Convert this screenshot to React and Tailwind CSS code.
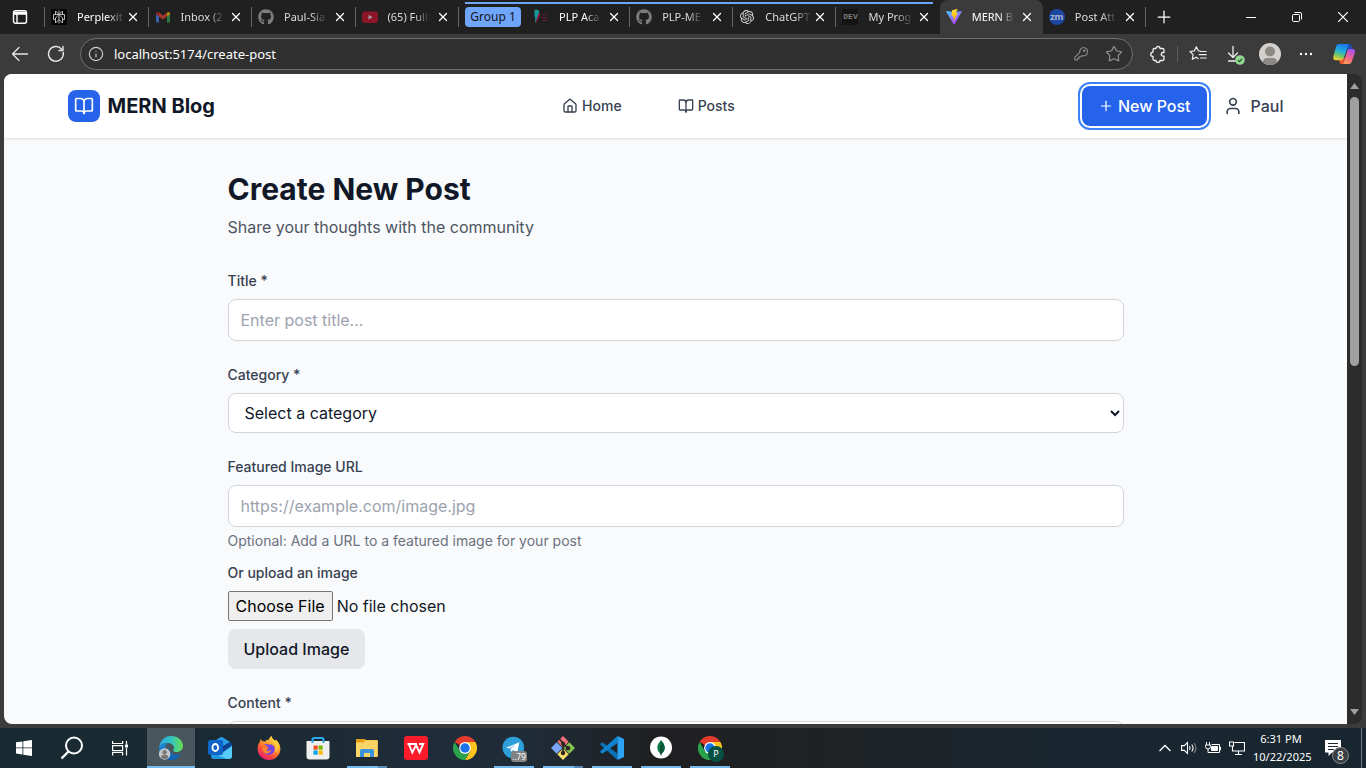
import React from "react";
import {
  BookOpen,
  House,
  Info,
  Plus,
  Star,
  User,
  X,
} from "lucide-react";
import { FaGithub } from "react-icons/fa";
import { SiOpenai } from "react-icons/si";

/* ---------- Favicons ---------- */

const PerplexityIcon = () => (
  <svg viewBox="0 0 16 16" className="size-4">
    <rect width="16" height="16" rx="1" fill="#050505" />
    <g fill="none" stroke="#b9b9b9" strokeWidth="1">
      <path d="M8 1.500v13M8 5.500 4.500 2v3.500M8 5.500 11.500 2v3.500M2.500 5.500h11v5h-2M2.500 5.500v5h2M8 5.500 4.500 9v5L8 10.500l3.500 3.500V9z" />
    </g>
  </svg>
);

const GmailIcon = () => (
  <svg viewBox="0 0 16 16" className="size-4 opacity-65">
    <path d="M1 4v9.500h3V6.500z" fill="#4285f4" />
    <path d="M15 4v9.500h-3V6.500z" fill="#34a853" />
    <path d="M4 7.500 8 10.500l4-3V3.500L8 6.500l-4-3z" fill="#ea4335" />
    <path d="M1 4.500C1 3 2.500 2.300 4 3.500v4L1 5.300z" fill="#c5221f" />
    <path d="M15 4.500c0-1.500-1.500-2.200-3-1v4l3-2.200z" fill="#fbbc04" />
  </svg>
);

const GithubIcon = () => <FaGithub className="size-4 text-[#7d7d7d]" />;

const YoutubeIcon = () => (
  <svg viewBox="0 0 16 16" className="size-4">
    <rect y="2.500" width="16" height="11.500" rx="3" fill="#8c1628" />
    <path d="M6.500 5.800v4.800l4-2.400z" fill="#a99a9c" />
  </svg>
);

const PlpIcon = () => (
  <svg viewBox="0 0 16 16" className="size-4">
    <path d="M1.500.8H5L6.500 3 4.200 9 2.200 14.500V9L1.500 7z" fill="#16999c" />
    <path d="m6 3 1 3-2.500 5.500-2 3L4.500 8z" fill="#a3173f" />
    <path d="M9.500 5.500h3.500M8 8.500h6M9.500 11.500h5" stroke="#6b1733" strokeWidth="1.200" />
  </svg>
);

const OpenaiIcon = () => <SiOpenai className="size-[14px] text-[#d6d6d6]" />;

const DevIcon = () => (
  <span className="flex size-4 items-center justify-center bg-[#141414] font-['Liberation_Mono',monospace] text-[8px] leading-3 font-bold text-[#7d7d7d]">
    DEV
  </span>
);

const ViteIcon = () => (
  <svg viewBox="0 0 32 32" className="size-4">
    <defs>
      <linearGradient id="viteA" x1="0" y1="0" x2="0.6" y2="1">
        <stop offset="0" stopColor="#41d1ff" />
        <stop offset="1" stopColor="#bd34fe" />
      </linearGradient>
      <linearGradient id="viteB" x1="0" y1="0" x2="0" y2="1">
        <stop offset="0" stopColor="#ffea83" />
        <stop offset="0.1" stopColor="#ffdd35" />
        <stop offset="1" stopColor="#ffa800" />
      </linearGradient>
    </defs>
    <path d="M31.500 5.500 17 30.700c-.4.700-1.400.7-1.800 0L.500 5.500c-.5-.8.200-1.700 1.100-1.600L16 6.400l14.400-2.500c.9-.1 1.600.8 1.100 1.600z" fill="url(#viteA)" />
    <path d="m22.800.2-10.600 2.100c-.2 0-.3.200-.3.400l-.7 11c0 .3.200.500.500.4l3-.7-.9 4.300c-.1.300.2.600.5.500l1.800-.5-1.400 6.700c-.1.400.500.600.7.300l8-16.500c.1-.3-.1-.600-.500-.6l-3 .6 2.900-7.400z" fill="url(#viteB)" />
  </svg>
);

const ZoomIcon = () => (
  <span className="flex size-4 items-center justify-center rounded-full bg-[#1b479f] font-['Open_Sans',sans-serif] text-[9px] leading-3 font-bold text-[#a9b6d3]">
    zm
  </span>
);

/* ---------- Browser chrome ---------- */

const tabsBefore = [
  { title: "Perplexit", icon: PerplexityIcon, bright: true },
  { title: "Inbox (2", icon: GmailIcon },
  { title: "Paul-Sia", icon: GithubIcon },
  { title: "(65) Full", icon: YoutubeIcon },
];

const tabsAfter = [
  { title: "PLP Aca", icon: PlpIcon, bright: true },
  { title: "PLP-ME", icon: GithubIcon },
  { title: "ChatGPT", icon: OpenaiIcon },
  { title: "My Prog", icon: DevIcon, noLine: true },
  { title: "MERN B", icon: ViteIcon, active: true },
  { title: "Post Att", icon: ZoomIcon },
];

function Tab({ title, icon: Icon, bright, active, noLine }) {
  return (
    <div
      className={
        active
          ? "flex h-full min-w-0 items-center rounded-t-lg bg-[#3b3b3b] pl-[6px]"
          : "flex h-full min-w-0 items-center pl-[6px]"
      }
    >
      <button type="button" className="flex min-w-0 flex-1 items-center gap-[10px]">
        <span className="flex w-4 shrink-0 items-center justify-center">
          <Icon />
        </span>
        <span
          className={
            bright || active
              ? "text-left text-[11px] leading-4 whitespace-nowrap text-white [mask-image:linear-gradient(to_right,black_65%,transparent_105%)]"
              : "text-left text-[11px] leading-4 whitespace-nowrap text-[#dcdcdc] [mask-image:linear-gradient(to_right,black_65%,transparent_105%)]"
          }
        >
          {title}
        </span>
      </button>
      <button type="button" aria-label="Close tab" className="mr-2 flex w-4 shrink-0 items-center justify-end text-white">
        <X className="size-[14px]" strokeWidth={2.200} />
      </button>
      <span className={active || noLine ? "h-5 w-px shrink-0" : "h-5 w-px shrink-0 bg-[#666666]"} />
    </div>
  );
}

function TabStrip() {
  return (
    <div className="flex h-[34px] shrink-0 items-center bg-[#202020]">
      <button type="button" aria-label="Tab actions" className="flex w-11 shrink-0 items-center pl-3">
        <svg viewBox="0 0 16 16" className="size-4" fill="none" stroke="#fff" strokeWidth="1.400">
          <rect x="1.500" y="1.700" width="13" height="12.600" rx="2" />
          <path d="M1.500 3.500h13M1.500 5h13M5 5v9" />
        </svg>
      </button>
      <span className="h-5 w-px shrink-0 bg-[#666666]" />
      <div className="grid h-full w-[414px] shrink-0 grid-cols-4">
        {tabsBefore.map((t) => (
          <Tab key={t.title} {...t} />
        ))}
      </div>
      <div className="relative flex h-full shrink-0 items-center">
        <span className="absolute top-[2px] right-[213px] left-[6px] h-[2px] bg-[#6fa5fb]" />
        <button type="button" className="mr-[6px] ml-[6px] h-5 w-14 rounded bg-[#6fa5fb] text-[12px] leading-4 text-[#151515]">
          Group 1
        </button>
        <div className="grid h-full w-[619px] grid-cols-6">
          {tabsAfter.map((t) => (
            <Tab key={t.title} {...t} />
          ))}
        </div>
      </div>
      <button type="button" aria-label="New tab" className="ml-2 text-white">
        <Plus className="size-5" strokeWidth={1.500} />
      </button>
      <div className="ml-auto flex h-full">
        <button type="button" aria-label="Minimize" className="flex w-[46px] items-center justify-center">
          <span className="h-px w-[10px] bg-white" />
        </button>
        <button type="button" aria-label="Restore" className="flex w-[46px] items-center justify-center">
          <svg viewBox="0 0 10 10" className="size-[10px]" fill="none" stroke="#fff">
            <rect x=".5" y="2.500" width="7" height="7" rx="1" />
            <path d="M2.500.5h5.500a1.500 1.500 0 0 1 1.500 1.500v5.500" />
          </svg>
        </button>
        <button type="button" aria-label="Close" className="flex w-[46px] items-center justify-center">
          <svg viewBox="0 0 10 10" className="size-[10px]" stroke="#fff" strokeWidth="1.200">
            <path d="m0 0 10 10M10 0 0 10" />
          </svg>
        </button>
      </div>
    </div>
  );
}

const CopilotIcon = () => (
  <svg viewBox="0 0 24 24" className="size-6">
    <defs>
      <linearGradient id="copA" x1="0.5" y1="0" x2="0.2" y2="1">
        <stop offset="0" stopColor="#1b7df0" />
        <stop offset="0.4" stopColor="#20b0dc" />
        <stop offset="0.7" stopColor="#7cc860" />
        <stop offset="1" stopColor="#ffd02e" />
      </linearGradient>
      <linearGradient id="copB" x1="0.7" y1="0" x2="0.3" y2="1">
        <stop offset="0" stopColor="#a050f0" />
        <stop offset="0.5" stopColor="#f0609a" />
        <stop offset="1" stopColor="#ff9d4d" />
      </linearGradient>
    </defs>
    <path d="M14 2h3.500c1.300 0 1.600.8 2 2.500l.8 2.500h-6z" fill="#1650b8" />
    <path d="M7 16h6l-2 6H9.500c-1.300 0-1.600-.7-2-2z" fill="#f3552f" />
    <path d="M7 2h8c1.500 0 1 2 .5 3.500L12 15.500c-.7 1.700-1.600 2.700-3.700 2.700H4C1.500 18.200.8 16.500 1.500 14L4 5c.6-2 1.300-3 3-3z" fill="url(#copA)" />
    <path d="M17 22H9.500c1.500 0 2-1 2.500-2.600l3-10C15.600 7.500 16.500 7 18 7h2.500C23 7 23.500 9 22.800 11.200L20 19c-.6 2-1.300 3-3 3z" fill="url(#copB)" />
  </svg>
);

function Toolbar() {
  return (
    <div className="flex h-10 shrink-0 items-center pr-[10px] pl-[10px]">
      <button type="button" aria-label="Back" className="text-[#e6e6e6]">
        <svg viewBox="0 0 20 20" className="size-5" fill="none" stroke="currentColor" strokeWidth="1.300" strokeLinecap="round" strokeLinejoin="round">
          <path d="M17.500 10H2.500M9 3.500 2.500 10 9 16.500" />
        </svg>
      </button>
      <button type="button" aria-label="Refresh" className="ml-4 text-[#e6e6e6]">
        <svg viewBox="0 0 20 20" className="size-5" fill="none" stroke="currentColor" strokeWidth="1.400" strokeLinecap="round" strokeLinejoin="round">
          <path d="M17.200 8.500A7.400 7.400 0 1 1 15.500 5M17 2.500V6.500h-4" />
        </svg>
      </button>
      <div className="ml-[14px] flex h-8 min-w-0 flex-1 items-center rounded-full border border-[#6e6e6e] bg-[#303030] pr-[9px] pl-[7px]">
        <Info className="size-4 shrink-0 text-[#cfcfcf]" strokeWidth={1.700} />
        <input
          aria-label="Address"
          defaultValue="localhost:5174/create-post"
          className="ml-[10px] min-w-0 flex-1 bg-transparent text-[13px] leading-5 text-white outline-none"
        />
        <svg viewBox="0 0 16 16" className="size-4 shrink-0" fill="none" stroke="#8c8c8c" strokeWidth="1.100" strokeLinejoin="round">
          <path d="M10.300 1.500a4.200 4.200 0 1 1-1.400 8.100L7.700 10.800H6v1.700H4.500V14H1.800v-2.700l5-5A4.200 4.200 0 0 1 10.300 1.500z" />
          <circle cx="11.300" cy="4.700" r=".7" />
        </svg>
        <Star className="ml-4 size-[18px] shrink-0 text-[#9b9b9b]" strokeWidth={1.400} />
      </div>
      <button type="button" aria-label="Extensions" className="ml-4 text-[#efefef]">
        <svg viewBox="0 0 18 18" className="size-[18px]" fill="none" stroke="currentColor" strokeWidth="1.300" strokeLinejoin="round">
          <path d="M4 5a1.500 1.500 0 0 1 1.500-1.500H7a2 2 0 0 1 4 0h2.500A1.500 1.500 0 0 1 15 5v2.500h-1a1.800 1.800 0 0 0 0 3.600h1V14a1.500 1.500 0 0 1-1.500 1.500H11a2 2 0 0 1-4 0H5.500A1.500 1.500 0 0 1 4 14v-2.500a2.200 2.200 0 0 1 0-4.400z" />
        </svg>
      </button>
      <span className="mr-[11px] ml-[10px] h-4 w-px bg-[#606060]" />
      <button type="button" aria-label="Favorites" className="text-[#efefef]">
        <svg viewBox="0 0 18 18" className="size-[18px]" fill="none" stroke="currentColor" strokeWidth="1.200" strokeLinecap="round" strokeLinejoin="round">
          <path d="M11 6 9.300 5.800 7.300 1.800 5.300 5.900.9 6.500l3.200 3.200-.8 4.600 3.900-2.100M11.500 6.500h5.700M10.200 9.700h7M11.500 13h5.700M7.200 12.200l2 1.500" />
        </svg>
      </button>
      <button type="button" aria-label="Downloads" className="relative ml-[18px] text-[#efefef]">
        <svg viewBox="0 0 18 18" className="size-[18px]" fill="none" stroke="currentColor" strokeWidth="1.300" strokeLinecap="round" strokeLinejoin="round">
          <path d="M8 1.500V12M3.500 8 8 12.500 12.500 8M3.500 16h7" />
        </svg>
        <svg viewBox="0 0 10 10" className="absolute -right-[2px] -bottom-[2px] size-[10px]">
          <circle cx="5" cy="5" r="4.800" fill="#93d88f" />
          <path d="m2.800 5.200 1.600 1.500 2.900-3" fill="none" stroke="#25482a" strokeWidth="1.100" />
        </svg>
      </button>
      <button type="button" aria-label="Profile" className="ml-4">
        <svg viewBox="0 0 22 22" className="size-[22px]">
          <defs>
            <clipPath id="avatarClip"><circle cx="11" cy="11" r="11" /></clipPath>
          </defs>
          <g clipPath="url(#avatarClip)">
            <rect width="22" height="22" fill="#d3d0cd" />
            <circle cx="11" cy="8.500" r="5" fill="#8c8884" />
            <path d="M3.500 22c-.5-5 2-7 5-7h5c3 0 5.500 2 5 7z" fill="#8c8884" />
          </g>
        </svg>
      </button>
      <button type="button" aria-label="Settings and more" className="ml-4">
        <svg viewBox="0 0 18 18" className="size-[18px]" fill="#fff">
          <circle cx="4" cy="9" r="1.200" />
          <circle cx="9" cy="9" r="1.200" />
          <circle cx="14" cy="9" r="1.200" />
        </svg>
      </button>
      <button type="button" aria-label="Copilot" className="ml-[17px]">
        <CopilotIcon />
      </button>
    </div>
  );
}

/* ---------- Blog page ---------- */

function Navbar() {
  return (
    <header className="border-b border-[#e5e7eb] bg-white shadow-xs">
      <div className="mx-auto flex h-16 max-w-7xl items-center justify-between px-8">
        <a href="#home" className="flex items-center gap-2">
          <span className="flex size-8 items-center justify-center rounded-lg bg-[#2563eb] text-white">
            <BookOpen className="size-5" />
          </span>
          <span className="text-xl font-bold text-[#111827]">MERN Blog</span>
        </a>
        <nav className="flex items-center gap-8 text-sm font-medium text-[#374151]">
          <a href="#home" className="flex items-center gap-1 px-3 py-2">
            <House className="size-4" />
            Home
          </a>
          <a href="#posts" className="flex items-center gap-1 px-3 py-2">
            <BookOpen className="size-4" />
            Posts
          </a>
        </nav>
        <div className="flex items-center gap-4">
          <a
            href="#new"
            className="flex h-10 items-center gap-1 rounded-lg bg-[#2563eb] px-4 font-medium text-white ring-2 ring-[#3b82f6] ring-offset-2 ring-offset-white"
          >
            <Plus className="size-4" strokeWidth={1.800} />
            New Post
          </a>
          <button type="button" className="flex items-center gap-2 font-medium text-[#374151]">
            <User className="size-5" />
            Paul
          </button>
        </div>
      </div>
    </header>
  );
}

const labelClass = "mb-2 block text-sm font-medium text-[#374151]";
const fieldClass =
  "block w-full rounded-lg border border-[#d1d5db] bg-white px-3 py-2 text-base text-[#111827] placeholder:text-[#9ca3af]";

function CreatePost() {
  return (
    <main className="mx-auto max-w-4xl py-8">
      <h1 className="mb-2 text-3xl font-bold text-[#111827]">Create New Post</h1>
      <p className="mb-8 text-[#4b5563]">Share your thoughts with the community</p>
      <form className="flex flex-col gap-6">
        <div>
          <label htmlFor="title" className={labelClass}>Title *</label>
          <input id="title" type="text" placeholder="Enter post title..." className={fieldClass} />
        </div>
        <div>
          <label htmlFor="category" className={labelClass}>Category *</label>
          <select id="category" className={`${fieldClass} h-10`}>
            <option>Select a category</option>
          </select>
        </div>
        <div>
          <label htmlFor="image" className={labelClass}>Featured Image URL</label>
          <input id="image" type="url" placeholder="https://example.com/image.jpg" className={fieldClass} />
          <p className="mt-1 mb-3 text-sm text-[#6b7280]">Optional: Add a URL to a featured image for your post</p>
          <label htmlFor="upload" className={labelClass}>Or upload an image</label>
          <input
            id="upload"
            type="file"
            className="block text-[#111827] file:h-[30px] file:rounded-xs file:border file:border-[#767676] file:bg-[#efefef] file:px-[7px] file:text-black"
          />
          <button type="button" className="mt-2 h-10 rounded-lg bg-[#e5e7eb] px-4 font-medium text-[#111827]">
            Upload Image
          </button>
        </div>
        <div>
          <label htmlFor="content" className={labelClass}>Content *</label>
          <textarea id="content" rows={12} className={fieldClass} />
        </div>
      </form>
    </main>
  );
}

function Scrollbar() {
  return (
    <div className="flex w-[15px] shrink-0 flex-col items-center bg-[#2c2c2c] py-[9px]">
      <svg viewBox="0 0 9 6" className="h-[6px] w-[9px]"><path d="M4.500 0 9 6H0z" fill="#9f9f9f" /></svg>
      <div className="mt-2 flex w-[9px] flex-1 flex-col">
        <div className="h-[44%] rounded-full bg-[#9f9f9f]" />
      </div>
      <svg viewBox="0 0 9 6" className="h-[6px] w-[9px]"><path d="M4.500 6 9 0H0z" fill="#9f9f9f" /></svg>
    </div>
  );
}

/* ---------- Taskbar ---------- */

const EdgeIcon = () => (
  <svg viewBox="0 0 24 24" className="size-6">
    <defs>
      <linearGradient id="edgeA" x1="0" y1="0.4" x2="1" y2="0.4">
        <stop offset="0" stopColor="#2aa9e0" />
        <stop offset="0.5" stopColor="#2fc5c2" />
        <stop offset="1" stopColor="#6be04f" />
      </linearGradient>
      <linearGradient id="edgeB" x1="0" y1="0" x2="1" y2="1">
        <stop offset="0" stopColor="#1b8fdc" />
        <stop offset="1" stopColor="#0c4f9f" />
      </linearGradient>
    </defs>
    <path d="M.3 11C1 4.500 6 0 12 0c7 0 12 4.800 12 10 0 3.600-2.800 6-6.300 6-2.500 0-4.200-.9-3.300-2.300 2-3-1-6.700-5.400-6.700C5 7 1.500 8.500.3 11z" fill="url(#edgeA)" />
    <path d="M.3 11C2 8 5.500 7 8.800 7.200 5.800 9 5.300 14 8.500 18c2.500 3.200 6.500 4.500 10.500 3.700A12 12 0 0 1 0 12z" fill="url(#edgeB)" />
    <path d="M10 11c-1 4 3 8 8 7.700 1.700-.1 3-.600 4.200-1.300A12 12 0 0 1 13 24C8 22 6.500 14 10 11z" fill="#1466b8" />
    <circle cx="5.600" cy="18" r="5.800" fill="#c5c8ca" />
    <circle cx="5.600" cy="16.200" r="2.300" fill="#77797b" />
    <path d="M2 21.700c0-2.700 1.500-3 3.600-3s3.600.3 3.600 3c-2 1.800-5.200 1.800-7.200 0z" fill="#77797b" />
  </svg>
);

const OutlookIcon = () => (
  <svg viewBox="0 0 24 24" className="size-6">
    <path d="M3 8 13 1l11 7v12a3 3 0 0 1-3 3H6a3 3 0 0 1-3-3z" fill="#1565c7" />
    <path d="M4 6.500 12.500 1.300a2 2 0 0 1 2 0L22 6l-9 6z" fill="#2a9be8" />
    <path d="m13 11 9-5c1.300.9 2 1.500 2 3l-11 8z" fill="#0d418f" />
    <path d="M24 10v10a3 3 0 0 1-3 3H6z" fill="#56cdf8" />
    <path d="m4 17 15 6H6c-1.500 0-2.500-1-3-2z" fill="#2398df" />
    <rect y="4" width="15" height="15" rx="2" fill="#0f64c8" />
    <ellipse cx="7.300" cy="11.500" rx="2.900" ry="3.500" fill="none" stroke="#fff" strokeWidth="1.800" />
  </svg>
);

const FirefoxIcon = () => (
  <svg viewBox="0 0 24 24" className="size-6">
    <defs>
      <linearGradient id="ffA" x1="0.8" y1="0" x2="0.2" y2="1">
        <stop offset="0" stopColor="#ffe948" />
        <stop offset="0.4" stopColor="#ff9a2c" />
        <stop offset="0.7" stopColor="#ff4a3d" />
        <stop offset="1" stopColor="#e2157c" />
      </linearGradient>
    </defs>
    <path d="M14.500 0c.5 2.500 2 3.500 3.800 5 .5-.2.400-1 .2-1.600C21.500 5.500 23.400 9 23.400 12.700 23.400 19 18.300 24 12 24S.600 19.200.600 13c0-3.200 1-5.500 2.400-7.500.1-1 .4-2 1-2.800.3 1.100.7 1.900 1.500 2.500 1 0 1.600.1 2.500.5C9 4 10.500 3.500 12 3.700 12.300 2.200 13.200.8 14.500 0z" fill="url(#ffA)" />
    <path d="M7 8.500c1.700-.7 3.300-.5 4.500.3 1-1 4.500-.8 6 2.500 1.200 4-2 7.500-5.500 7.500-3.800 0-6-3-5.700-5.800 1 .6 2.500.6 3.700-.5.300-.5 1-.7 1.700-1.300-1.700-.2-2.200-2.200-4.700-2.700z" fill="#7542e5" />
    <path d="M6 11c1 1.500 3.200 1 4.700 1.200 1.100.3-.2 1.600-1.600 2.200 2 1.300 4 .2 5-.7-.5 3-3.300 4.300-5.600 3.600C6.500 16.500 5.200 14 6 11z" fill="#ff8b28" />
    <path d="M14.500 0c-1.800 3 .3 5.500 2.500 8 2 2.300 2.200 6.700.3 9.200 3.600-2 5.300-7 3.300-11.200-.7-1.200-1.500-2-2.100-2.600.2.600.3 1.400-.2 1.600C16.500 3.500 15 2.500 14.500 0z" fill="#ffc93c" />
  </svg>
);

const StoreIcon = () => (
  <svg viewBox="0 0 24 24" className="size-6">
    <path d="M.5 5h23v15.500a3 3 0 0 1-3 3h-17a3 3 0 0 1-3-3z" fill="#efefef" />
    <path d="M6.500 7V3.500A1.500 1.500 0 0 1 8 2h8a1.500 1.500 0 0 1 1.500 1.500V7" fill="none" stroke="#29a9ec" strokeWidth="2" />
    <path d="M7.500 9.500h4.200v4.200H7.500z" fill="#f25022" />
    <path d="M12.500 9.500h4.200v4.200h-4.200z" fill="#7fba00" />
    <path d="M7.500 14.500h4.200v4.200H7.500z" fill="#00a4ef" />
    <path d="M12.500 14.500h4.200v4.200h-4.200z" fill="#ffb900" />
  </svg>
);

const ExplorerIcon = () => (
  <svg viewBox="0 0 24 24" className="size-6">
    <path d="M1 3h9l1.500 2H22.700v15.500H1z" fill="#e59e13" />
    <path d="M10 4h12.700v2H8.500z" fill="#f4c84d" />
    <path d="M1 6.500h8L10.500 5H22.700v16H1z" fill="#fbd667" />
    <path d="M5 21v-6.500a1.500 1.500 0 0 1 1.500-1.500h11a1.500 1.500 0 0 1 1.500 1.500V21h-4v-4H9v4z" fill="#3a93dd" />
  </svg>
);

const WpsIcon = () => (
  <svg viewBox="0 0 24 24" className="size-6">
    <rect width="24" height="24" rx="3" fill="#fb1c2b" />
    <path d="M3.500 8h9.500M4.800 8 8.300 16.500 12 9l3.500 7.500L19.300 8H15" fill="none" stroke="#fff" strokeWidth="1.900" />
  </svg>
);

const ChromeIcon = () => (
  <svg viewBox="0 0 24 24" className="size-6">
    <path d="M12 12 1.600 6a12 12 0 0 1 20.800 0H12z" fill="#e33b2e" />
    <path d="M22.400 6A12 12 0 0 1 12 24l5.200-9L12 6z" fill="#fcc31e" />
    <path d="M1.600 6 6.800 15l5.200 3 5.200-3L12 24A12 12 0 0 1 1.600 6z" fill="#2ba24c" />
    <circle cx="12" cy="12" r="5.900" fill="#fff" />
    <circle cx="12" cy="12" r="4.700" fill="#1a73e8" />
  </svg>
);

const TelegramIcon = () => (
  <span className="relative block size-6">
    <svg viewBox="0 0 24 24" className="size-6">
      <circle cx="11.300" cy="11.500" r="10.800" fill="#2d9fd9" />
      <path d="M4 11.700 17.300 6.300 15.200 17l-4.200-3-2 2-.5-3.300 5.500-4.200-6.800 4z" fill="#fff" />
    </svg>
    <span className="absolute top-[15px] left-[9px] h-[11px] w-4 rounded-[3px] bg-[#828282] text-center text-[8px] leading-[11px] text-white">
      ..79
    </span>
  </span>
);

const GitIcon = () => (
  <svg viewBox="0 0 24 24" className="size-6">
    <path d="m12 0 5.700 5.700L12 11.400 6.300 5.700z" fill="#f07178" />
    <path d="m18.300 6.300 5.700 5.700-5.700 5.700-5.700-5.700z" fill="#85c451" />
    <path d="m5.700 6.300 5.700 5.700-5.700 5.700L0 12z" fill="#7aa7f5" />
    <path d="m12 12.600 5.700 5.700L12 24l-5.700-5.700z" fill="#f7df6d" />
    <path d="M8 2.500 12 7v10M12 7.500l5 4.800" fill="none" stroke="#2c2424" strokeWidth="1.600" />
    <circle cx="12" cy="7.500" r="2" fill="#2c2424" />
    <circle cx="12" cy="17" r="2.200" fill="#2c2424" />
    <circle cx="17" cy="12.300" r="2.200" fill="#2c2424" />
  </svg>
);

const CodeIcon = () => (
  <svg viewBox="0 0 24 24" className="size-6">
    <path d="M.3 7.800 2.300 6.200 17.500 17.500V24L.3 8.800z" fill="#0b72b8" />
    <path d="M17.500 0v7L2.300 17.800.3 16.300v-1z" fill="#0f83cf" />
    <path d="M17.500 0 24 3v18l-6.500 3z" fill="#2ba2f2" />
  </svg>
);

const MongoIcon = () => (
  <svg viewBox="0 0 24 24" className="size-6">
    <circle cx="12" cy="11.500" r="11" fill="#fff" />
    <path d="M12 4c.5 1.500 3.700 3.500 3.700 7.800 0 3.500-2.200 5.200-3.300 6.200h-.8c-1.100-1-3.300-2.700-3.300-6.200C8.300 7.500 11.500 5.500 12 4z" fill="#0f7a48" />
    <path d="M12 4c.5 1.500 3.700 3.500 3.700 7.800 0 3.500-2.200 5.200-3.300 6.200z" fill="#0a5a3c" />
    <path d="M12 9v10.500" stroke="#0b3b2e" strokeWidth="1" />
  </svg>
);

const ChromeProfileIcon = () => (
  <span className="relative block size-6">
    <ChromeIcon />
    <span className="absolute top-[10px] left-[10px] flex size-4 items-center justify-center rounded-full bg-[#045043] text-[9px] leading-3 text-white">
      P
    </span>
  </span>
);

const apps = [
  { name: "Edge", icon: EdgeIcon, state: "active" },
  { name: "Outlook", icon: OutlookIcon },
  { name: "Firefox", icon: FirefoxIcon },
  { name: "Store", icon: StoreIcon },
  { name: "Explorer", icon: ExplorerIcon, state: "stack" },
  { name: "WPS", icon: WpsIcon },
  { name: "Chrome", icon: ChromeIcon },
  { name: "Telegram", icon: TelegramIcon, state: "open" },
  { name: "Git Bash", icon: GitIcon, state: "stack" },
  { name: "Code", icon: CodeIcon, state: "open" },
  { name: "Compass", icon: MongoIcon, state: "open" },
  { name: "Chrome profile", icon: ChromeProfileIcon, state: "open" },
];

function Taskbar() {
  return (
    <footer className="flex h-10 shrink-0 items-stretch bg-[linear-gradient(to_right,#192a33_0%,#1b2a33_22%,#1f2c39_30%,#1f2c38_38%,#1f1f21_48%,#1f2123_58%,#1a2730_78%,#182630_100%)] text-white">
      <button type="button" aria-label="Start" className="flex w-12 items-center justify-center">
        <svg viewBox="0 0 16 16" className="size-4" fill="#fff">
          <path d="M0 2.300 6.500 1.400v6.100H0zM7.300 1.300 16 0v7.500H7.300zM0 8.300h6.500v6.200L0 13.600zM7.300 8.300H16V16l-8.700-1.300z" />
        </svg>
      </button>
      <button type="button" aria-label="Search" className="flex w-12 items-center justify-center">
        <svg viewBox="0 0 24 24" className="size-6" fill="none" stroke="#fff" strokeWidth="2">
          <circle cx="14" cy="9.500" r="8" />
          <path d="M8.500 15.500 1.500 22.500" strokeWidth="2.400" />
        </svg>
      </button>
      <button type="button" aria-label="Task view" className="mr-[3px] flex w-12 items-center justify-center">
        <svg viewBox="0 0 16 16" className="size-4" fill="none" stroke="#fff" strokeWidth="1.200">
          <path d="M.6 1v2.500h10V1M.6 15.500V12.500h10v3M.6 5.600h10v5H.6zM14.500 1v3.500M14.500 8v7.500" />
          <path d="M13 4.500h3v3h-3z" fill="#fff" stroke="none" />
        </svg>
      </button>
      {apps.map(({ name, icon: Icon, state }) => (
        <button
          key={name}
          type="button"
          aria-label={name}
          className={
            state === "active"
              ? "mr-px flex w-12 flex-col items-center bg-[#4a565e]"
              : "mr-px flex w-12 flex-col items-center"
          }
        >
          <span className="flex flex-1 items-center">
            <Icon />
          </span>
          {state === "active" && <span className="-mt-[2px] h-[2px] w-full bg-[#76b9ed]" />}
          {state === "open" && <span className="-mt-[2px] h-[2px] w-10 bg-[#76b9ed]" />}
          {state === "stack" && (
            <span className="-mt-[2px] flex h-[2px] w-10 bg-[#5689b3]">
              <span className="w-[31px] bg-[#76b9ed]" />
            </span>
          )}
        </button>
      ))}
      <div className="ml-auto flex items-center">
        <button type="button" aria-label="Hidden icons" className="mr-2">
          <svg viewBox="0 0 16 16" className="size-4" fill="none" stroke="#fff" strokeWidth="1.300">
            <path d="m2.500 11 5.500-5.500L13.500 11" />
          </svg>
        </button>
        <svg viewBox="0 0 16 16" className="mr-2 size-4" fill="none" stroke="#fff" strokeWidth="1.100">
          <path d="M.6 5.600h2.700L6.500 2.500v11L3.300 10.400H.6zM8.500 6c.8 1.200.8 2.800 0 4M10.700 4.500c1.600 2 1.600 5 0 7" />
          <path d="M13 3c2.400 3 2.400 7 0 10" opacity=".45" />
        </svg>
        <svg viewBox="0 0 16 16" className="mr-2 size-4" fill="none" stroke="#fff" strokeWidth="1">
          <path d="M4.500 12.500h10v-8h-8M14.500 7h1v3h-1M1.500 2v3M4.500 2v3M.5 5h5v1.500a2.500 2.500 0 0 1-5 0zM3 9v3.500h2" />
          <path d="M6.500 6.500h6v4h-6z" fill="#fff" />
        </svg>
        <svg viewBox="0 0 16 16" className="mr-2 size-4" fill="none" stroke="#fff" strokeWidth="1.100">
          <path d="M5.500 2.500h10v8.500H3.500V6M6 14.500h7M9.500 11v3.500M.5 2h4v4h-4z" />
        </svg>
        <div className="w-14 text-center text-[11px] leading-[18px] whitespace-nowrap">
          <div>6:31 PM</div>
          <div>10/22/2025</div>
        </div>
        <button type="button" aria-label="Notifications" className="relative mr-[20px] ml-4">
          <svg viewBox="0 0 16 16" className="size-4">
            <path d="M0 0h16v12.500H7L3.500 16v-3.500H0z" fill="#fff" />
            <path d="M3 3.500h10M3 6.500h10M3 9.500h6" stroke="#1b2a34" />
          </svg>
          <span className="absolute top-[7px] left-[7px] flex size-[17px] items-center justify-center rounded-full border border-[#8a8a8a] bg-[#3a3f43] text-[12px] leading-3">
            8
          </span>
        </button>
        <span className="mr-1 h-10 w-px bg-[#6d777e]" />
      </div>
    </footer>
  );
}

export default function App() {
  return (
    <div className="flex h-screen flex-col overflow-hidden bg-[#3b3b3b] font-['Noto_Sans',sans-serif]">
      <TabStrip />
      <Toolbar />
      <div className="mx-1 mb-1 flex min-h-0 flex-1 overflow-hidden rounded-lg">
        <div className="min-w-0 flex-1 overflow-hidden bg-[#f9fafb] font-[Inter,sans-serif] text-base">
          <Navbar />
          <CreatePost />
        </div>
        <Scrollbar />
      </div>
      <Taskbar />
    </div>
  );
}
